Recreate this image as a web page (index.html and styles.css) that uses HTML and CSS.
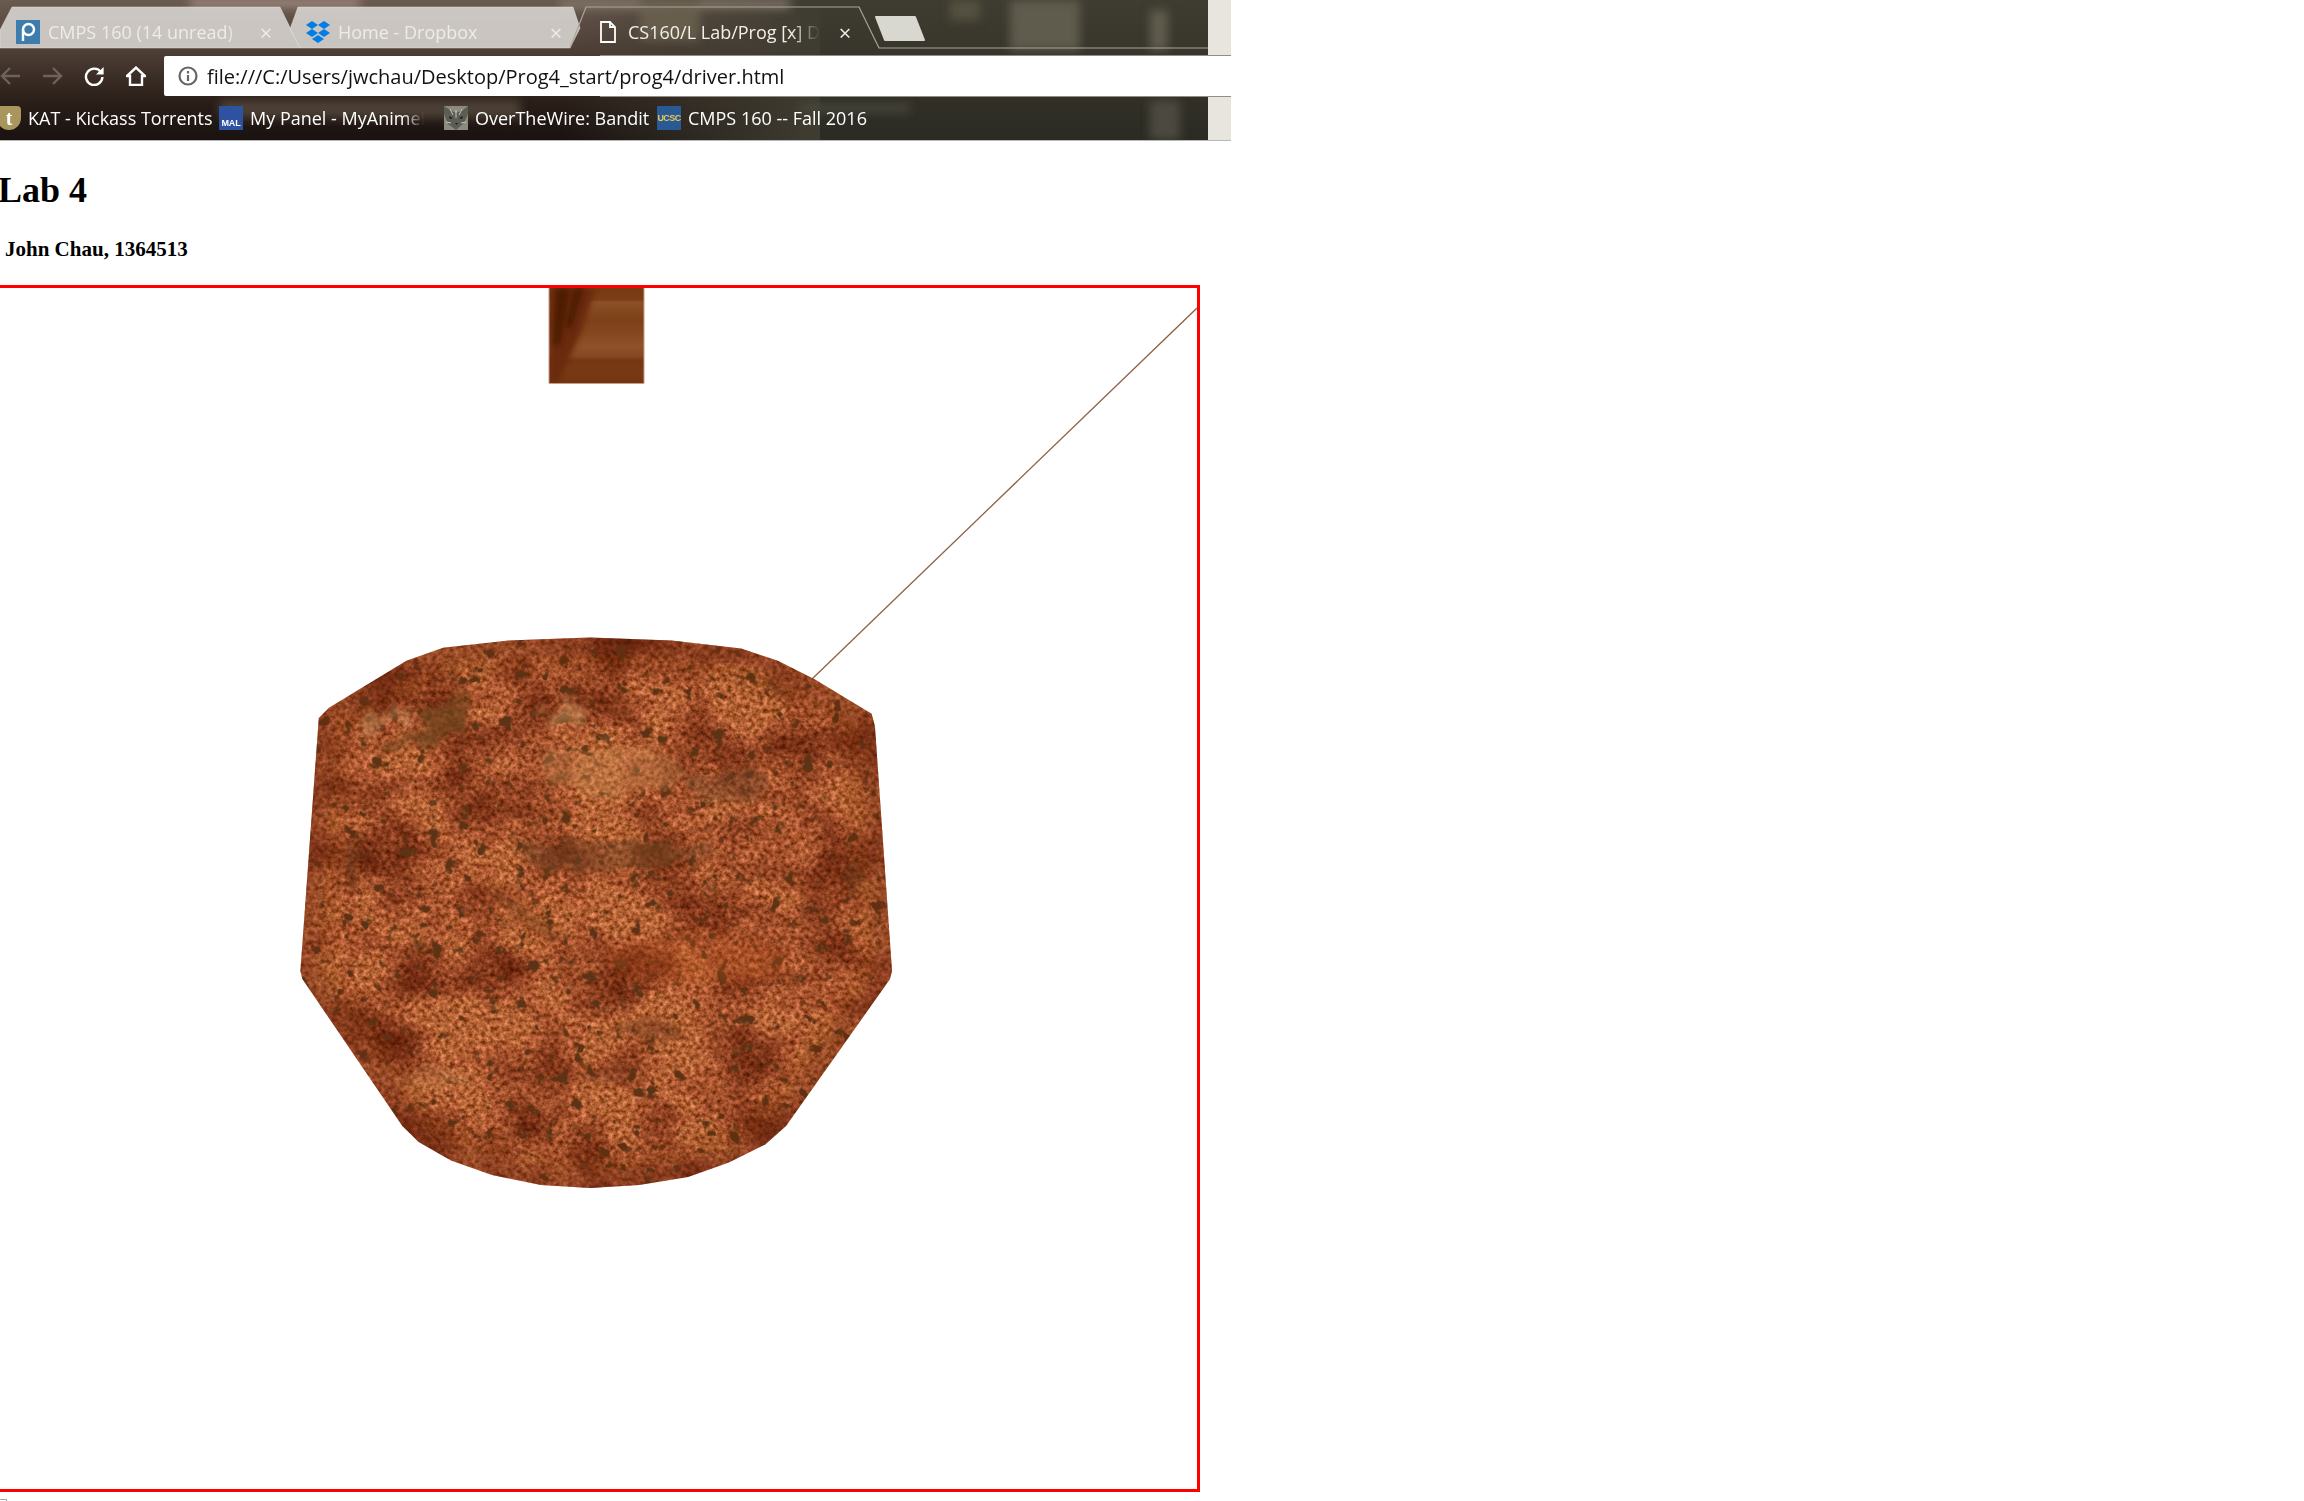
FILE: index.html
```html
<!DOCTYPE html>
<html lang="en">
<head>
<meta charset="utf-8">
<title>Lab 4</title>
<link rel="stylesheet" href="styles.css">
</head>
<body>
<header class="chrome">
  <svg class="chrome-bg" width="1231" height="140" viewBox="0 0 1231 140" aria-hidden="true">
    <defs>
      <filter id="soft" x="-20%" y="-50%" width="140%" height="200%"><feGaussianBlur stdDeviation="5"/></filter>
      <filter id="softer" x="-20%" y="-50%" width="140%" height="200%"><feGaussianBlur stdDeviation="12"/></filter>
      <linearGradient id="base" x1="0" x2="0" y1="0" y2="1">
        <stop offset="0" stop-color="#6b5a50"/><stop offset=".4" stop-color="#4a3b33"/><stop offset=".72" stop-color="#2a1f19"/><stop offset="1" stop-color="#191210"/>
      </linearGradient>
      <linearGradient id="rightBase" x1="0" x2="0" y1="0" y2="1">
        <stop offset="0" stop-color="#3f3c31"/><stop offset="1" stop-color="#2c2b23"/>
      </linearGradient>
      <linearGradient id="fadeR" x1="0" x2="1" y1="0" y2="0">
        <stop offset="0" stop-color="#3f3c31" stop-opacity="0"/><stop offset="1" stop-color="#3f3c31"/>
      </linearGradient>
    </defs>
    <rect width="1231" height="140" fill="url(#base)"/>
    <rect x="560" width="420" height="140" fill="url(#fadeR)" opacity=".0"/>
    <rect x="800" width="410" height="140" fill="url(#rightBase)"/>
    <rect x="560" width="260" height="140" fill="url(#fadeR)"/>
    <g filter="url(#soft)">
      <rect x="560" y="0" width="230" height="8" fill="#857a6c"/>
      <rect x="190" y="0" width="170" height="6" fill="#b09c90"/>
      <rect x="640" y="0" width="60" height="40" fill="#6c6250" opacity=".8"/>
      <rect x="1010" y="0" width="70" height="50" fill="#5f5b4e"/>
      <rect x="1150" y="10" width="18" height="40" fill="#5f5b4e"/>
      <rect x="220" y="100" width="300" height="18" fill="#584a40" opacity=".8"/>
      <rect x="800" y="104" width="110" height="8" fill="#4a473c"/>
      <rect x="1150" y="100" width="30" height="40" fill="#4c4a3f"/>
      <rect x="950" y="0" width="30" height="20" fill="#55513f"/>
    </g>
    <rect x="1208" width="23" height="140" fill="#e8e4de"/>
    <rect y="55" x="600" width="631" height="1" fill="#8f8d86"/>
    <rect y="96" x="600" width="631" height="1" fill="#8f8d86"/>
    <path class="tab-shape" d="M0 48 L0 30 L12 7 H280 L300 48 Z"/>
    <path class="tab-shape" d="M300 48 L290 29 L298 7 H573 L580 28 L570 48 Z"/>
    <path class="tab-line" d="M570 48 L586 7 H859 L879 48 H1208"/>
    <path class="new-tab" d="M876 17 H915 L924 40 H885 Z"/>
  </svg>

  <div class="tabstrip">
    <div class="tab">
      <svg class="favicon" viewBox="0 0 24 24" aria-hidden="true"><rect width="24" height="24" fill="#3d7dad"/><circle cx="12.5" cy="9.5" r="5.5" fill="none" stroke="#fff" stroke-width="2.4"/><path d="M7 9v12" stroke="#fff" stroke-width="2.4"/></svg>
      <span class="tab-title">CMPS 160 (14 unread)</span>
      <span class="tab-close">×</span>
    </div>
    <div class="tab">
      <svg class="favicon" viewBox="0 0 24 24" aria-hidden="true"><path fill="#007ee5" d="M6 1l6 4-6 4-6-4zM18 1l6 4-6 4-6-4zM6 9l6 4-6 4-6-4zM18 9l6 4-6 4-6-4zM12 15l6 4-6 4-6-4z"/></svg>
      <span class="tab-title">Home - Dropbox</span>
      <span class="tab-close">×</span>
    </div>
    <div class="tab tab-active">
      <svg class="favicon" viewBox="0 0 24 24" aria-hidden="true"><path d="M5 2h9l5 5v15H5z M14 2v5h5" fill="none" stroke="#fff" stroke-width="1.8"/></svg>
      <span class="tab-title">CS160/L Lab/Prog [x] Driver</span>
      <span class="tab-close">×</span>
    </div>
  </div>

  <div class="navbar">
    <svg class="nav-icon dim" viewBox="0 0 20 20" aria-hidden="true"><path d="M20 10H2M10 2l-8 8 8 8"/></svg>
    <svg class="nav-icon dim" viewBox="0 0 20 20" aria-hidden="true"><path d="M0 10h18M10 2l8 8-8 8"/></svg>
    <svg class="nav-icon" viewBox="0 0 20 20" aria-hidden="true"><path d="M17 6.2A8.2 8.2 0 1 0 18.4 11"/><path class="solid" d="M19.6 1v7.6H12z"/></svg>
    <svg class="nav-icon" viewBox="0 0 20 20" aria-hidden="true"><path d="M1 10l9-8.4 9 8.4h-3v9H4v-9z"/></svg>
    <div class="omnibox">
      <svg class="info" viewBox="0 0 20 20" aria-hidden="true"><circle cx="10" cy="10" r="8.5"/><path d="M10 9v6M10 5v2.4"/></svg>
      <span class="url">file:///C:/Users/jwchau/Desktop/Prog4_start/prog4/driver.html</span>
    </div>
  </div>

  <div class="bookmarks">
    <a class="bookmark bm-kat"><span class="bm-icon shield">t</span><span class="bm-label">KAT - Kickass Torrents</span></a>
    <a class="bookmark bm-mal"><span class="bm-icon mal">MAL</span><span class="bm-label bm-fade">My Panel - MyAnimeList</span></a>
    <a class="bookmark bm-otw">
      <svg class="bm-icon" viewBox="0 0 24 24" aria-hidden="true"><rect width="24" height="24" fill="#8b8b80"/><path d="M0 0l6 4 6 3 7-3 5-4v8l-4 9-8 7-8-6-4-10z" fill="#5c5e56"/><path d="M5 10l4 2-3 1zM19 10l-4 2 3 1zM11 17h3l-1.500 2z" fill="#1d1d1a"/><path d="M2 16l5 1M22 16l-5 1M12 4v8M6 3l3 6M18 3l-3 6" stroke="#c5c5b8" stroke-width="1"/></svg>
      <span class="bm-label">OverTheWire: Bandit</span>
    </a>
    <a class="bookmark bm-ucsc"><span class="bm-icon ucsc">UCSC</span><span class="bm-label">CMPS 160 -- Fall 2016</span></a>
  </div>
</header>

<main class="page">
  <h1 class="title">Lab 4</h1>
  <h4 class="author">John Chau, 1364513</h4>
  <div class="stage">
    <svg class="scene" width="1200" height="1201" viewBox="-3 288 1200 1201" role="img" aria-label="Textured 3D scene">
      <defs>
        <filter id="clay" x="0" y="0" width="100%" height="100%" color-interpolation-filters="sRGB">
          <feTurbulence type="fractalNoise" baseFrequency=".22" numOctaves="3" seed="7" result="fine"/>
          <feColorMatrix in="fine" type="matrix" values=".75 0 0 0 .32  .6 0 0 0 .08  .55 0 0 0 -.07  0 0 0 0 1" result="fineC"/>
          <feTurbulence type="fractalNoise" baseFrequency=".014 .018" numOctaves="4" seed="12" result="coarse"/>
          <feColorMatrix in="coarse" type="matrix" values="1 0 0 0 .42  1.400 0 0 0 .14  1.800 0 0 0 -.05  0 0 0 0 1" result="coarseC"/>
          <feBlend in="fineC" in2="coarseC" mode="multiply" result="mix"/>
          <feTurbulence type="fractalNoise" baseFrequency=".07" numOctaves="3" seed="31" result="spots"/>
          <feColorMatrix in="spots" type="matrix" values="0 0 0 0 .36  0 0 0 0 .2  0 0 0 0 .08  9 0 0 0 -5.700" result="spotsC"/>
          <feMerge><feMergeNode in="mix"/><feMergeNode in="spotsC"/></feMerge>
        </filter>
        <filter id="blotch" x="-30%" y="-30%" width="160%" height="160%">
          <feTurbulence type="fractalNoise" baseFrequency=".05" numOctaves="3" seed="4" result="n"/>
          <feDisplacementMap in="SourceGraphic" in2="n" scale="32" result="d"/>
          <feGaussianBlur in="d" stdDeviation="3"/>
        </filter>
        <filter id="edgeBlur" x="-20%" y="-20%" width="140%" height="140%"><feGaussianBlur stdDeviation="16"/></filter>
        <filter id="streak" x="-30%" y="-10%" width="160%" height="120%"><feGaussianBlur stdDeviation="2.500"/></filter>
        <clipPath id="pot"><path id="potPath" d="M406.500 660.800L443.200 647.700L508.500 640.400L590 637.500L671.700 640.400L741 648.600L777.800 660.800L814.500 679.200L871.600 713.800L874.900 726L892 971L890 979L786 1126L765.500 1144.300L728.800 1162.600L688 1177L639 1185L590 1188L541 1185L492 1175L451 1160.600L418.700 1142L402.400 1126L302.400 979L300.400 971L318.800 718L329 707.700Z"/></clipPath>
        <clipPath id="blockClip"><rect x="549" y="288" width="95" height="95"/></clipPath>
        <linearGradient id="bands" x1="0" x2="0" y1="0" y2="1">
          <stop offset="0" stop-color="#773a12"/><stop offset=".12" stop-color="#7b3d15"/><stop offset=".15" stop-color="#8d5028"/><stop offset=".25" stop-color="#84481f"/><stop offset=".34" stop-color="#7d4019"/><stop offset=".48" stop-color="#84471f"/><stop offset=".62" stop-color="#8e5129"/><stop offset=".72" stop-color="#844820"/><stop offset=".76" stop-color="#743712"/><stop offset=".88" stop-color="#783a15"/><stop offset="1" stop-color="#733612"/>
        </linearGradient>
      </defs>

      <path class="tether" d="M1197 308L812 679"/>

      <g clip-path="url(#blockClip)">
        <rect x="549" y="288" width="95" height="95" fill="url(#bands)"/>
        <path d="M549 288H596L580 335L558 383H549Z" fill="#6a2c0a" filter="url(#streak)"/>
        <path d="M556 288H570L560 345L553 345Z M574 288H584L571 330L566 325Z" fill="#4e1c04" filter="url(#streak)"/>
      </g>
      <path class="block-edge" d="M549 288V383.500H644V288"/>

      <g clip-path="url(#pot)">
        <rect x="290" y="630" width="612" height="565" filter="url(#clay)"/>
        <g filter="url(#blotch)">
          <ellipse cx="600" cy="855" rx="80" ry="15" fill="#6f3f1f" opacity=".5"/>
          <ellipse cx="675" cy="852" rx="45" ry="10" fill="#6f3f1f" opacity=".45"/>
          <path d="M490 880L560 935L552 945L484 895Z" fill="#713c1c" opacity=".45"/>
          <path d="M710 880L722 900L708 890Z" fill="#553014" opacity=".6"/>
          <ellipse cx="729" cy="785" rx="42" ry="18" fill="#6e3e1e" opacity=".45"/>
          <ellipse cx="776" cy="690" rx="14" ry="5" fill="#5a3012" opacity=".55"/>
          <ellipse cx="349" cy="861" rx="7" ry="24" fill="#5d3416" opacity=".6"/>
          <ellipse cx="419" cy="947" rx="8" ry="5" fill="#4e2a10" opacity=".8"/>
          <ellipse cx="651" cy="1030" rx="35" ry="10" fill="#6a3718" opacity=".45"/>
          <ellipse cx="608" cy="1075" rx="30" ry="10" fill="#6a3718" opacity=".35"/>
          <ellipse cx="855" cy="875" rx="9" ry="20" fill="#5d3416" opacity=".5"/>
          <path d="M380 755L430 715L470 695L460 735L420 745L395 760Z" fill="#6c431f" opacity=".7"/>
          <ellipse cx="566" cy="715" rx="25" ry="12" fill="#d9a36d" opacity=".45"/>
          <ellipse cx="610" cy="770" rx="70" ry="26" fill="#cf8f54" opacity=".35"/>
          <ellipse cx="700" cy="960" rx="90" ry="22" fill="#b34f1f" opacity=".3"/>
          <ellipse cx="430" cy="1080" rx="40" ry="10" fill="#c88d55" opacity=".25"/>
          <ellipse cx="383" cy="720" rx="32" ry="6" fill="#c99b68" opacity=".45" transform="rotate(-25 383 720)"/>
        </g>
        <path class="pot-shade" d="M406.500 660.800L443.200 647.700L508.500 640.400L590 637.500L671.700 640.400L741 648.600L777.800 660.800L814.500 679.200L871.600 713.800L874.900 726L892 971L890 979L786 1126L765.500 1144.300L728.800 1162.600L688 1177L639 1185L590 1188L541 1185L492 1175L451 1160.600L418.700 1142L402.400 1126L302.400 979L300.400 971L318.800 718L329 707.700Z" filter="url(#edgeBlur)"/>
      </g>
    </svg>
  </div>
  <div class="stub"></div>
</main>
</body>
</html>
```
FILE: styles.css
```css
* { box-sizing: border-box; }
html, body { margin: 0; height: 100%; overflow: hidden; background: #fff; }

.chrome {
  position: relative;
  width: 1231px;
  height: 141px;
  border-bottom: 1px solid #b8b8b8;
  font-family: "Open Sans", "Noto Sans", sans-serif;
  overflow: hidden;
}
.chrome-bg { position: absolute; left: 0; top: 0; }
.tab-shape { fill: #d6d3cf; fill-opacity: .9; stroke: #e6e3df; stroke-opacity: .5; }
.tab-line { fill: none; stroke: #a8a59c; stroke-width: 1.2; }
.new-tab { fill: #d8d8d0; stroke: #d8d8d0; stroke-width: 2; stroke-linejoin: round; }

.tabstrip, .navbar, .bookmarks { position: relative; display: flex; align-items: center; }
.tabstrip { height: 56px; padding-top: 8px; }
.tab { width: 290px; height: 40px; flex: none; display: flex; align-items: center; padding: 0 14px 0 16px; color: #eeece8; font-size: 18px; }
.tab + .tab { margin-left: 0; }
.favicon { width: 24px; height: 24px; flex: none; margin-right: 8px; }
.tab-title { flex: 1; white-space: nowrap; overflow: hidden; -webkit-mask-image: linear-gradient(90deg, #000 85%, transparent); mask-image: linear-gradient(90deg, #000 85%, transparent); }
.tab-close { width: 20px; flex: none; text-align: center; font-size: 22px; line-height: 1; color: #ecebe6; }
.tab-active { color: #f2f0ea; }
.tab-active .tab-title { flex: none; width: 192px; margin-right: 15px; }

.navbar { height: 40px; }
.nav-icon { width: 20px; height: 20px; flex: none; margin-right: 22px; fill: none; stroke: #fff; stroke-width: 2.4; }
.nav-icon.dim { stroke: #6e625a; }
.nav-icon .solid { fill: #fff; stroke: none; }
.navbar .nav-icon:nth-child(1) { margin-right: 23px; }
.navbar .nav-icon:nth-child(3) { margin-left: -1px; margin-right: 22px; }
.navbar .nav-icon:nth-child(4) { margin-right: 18px; }
.omnibox { flex: 1; height: 40px; background: #fff; border-radius: 2px 0 0 2px; display: flex; align-items: center; padding-left: 14px; }
.info { width: 20px; height: 20px; flex: none; margin-right: 9px; fill: none; stroke: #666; stroke-width: 2.2; }
.url { font-size: 20px; color: #111; white-space: nowrap; }

.bookmarks { height: 44px; color: #fff; font-size: 18px; }
.bookmark { display: flex; align-items: center; flex: none; white-space: nowrap; }
.bm-icon { width: 24px; height: 24px; flex: none; display: block; margin-right: 7px; }
.bm-kat { width: 222px; margin-left: -3px; }
.bm-mal { width: 225px; }
.bm-otw { width: 213px; }
.bm-label { display: block; }
.bm-fade { width: 174px; overflow: hidden; -webkit-mask-image: linear-gradient(90deg, #000 88%, transparent); mask-image: linear-gradient(90deg, #000 88%, transparent); }
.shield { background: #a8965c; border-radius: 4px 4px 12px 12px; color: #fff; font: bold 20px/24px "Liberation Serif", serif; text-align: center; }
.mal { background: #2e51a2; color: #fff; font: bold 9px/13px "Liberation Sans", sans-serif; padding-top: 11px; text-align: center; letter-spacing: -.2px; }
.ucsc { background: #2a5a96; color: #e8c84c; font: bold 9px/24px "Liberation Sans", sans-serif; text-align: center; letter-spacing: -.6px; }

.page { font-family: "Liberation Serif", "Times New Roman", serif; color: #000; }
.title { margin: 29px 0 27px -2px; font-size: 36px; line-height: 40px; font-weight: bold; }
.author { margin: 0 0 24px 5px; font-size: 21px; line-height: 24px; font-weight: bold; }
.stage { width: 1206px; margin-left: -6px; border: 3px solid #f00; background: #fff; }
.scene { display: block; }
.tether { fill: none; stroke: #8f6145; stroke-width: 1.3; }
.block-edge { fill: none; stroke: #c79e84; stroke-width: 1; }
.pot-shade { fill: none; stroke: #6e2c0c; stroke-width: 34; opacity: .55; }
.stub { width: 7px; height: 2px; margin-top: 7px; border-top: 1px solid #a8a8a8; border-right: 1px solid #a8a8a8; }
```
